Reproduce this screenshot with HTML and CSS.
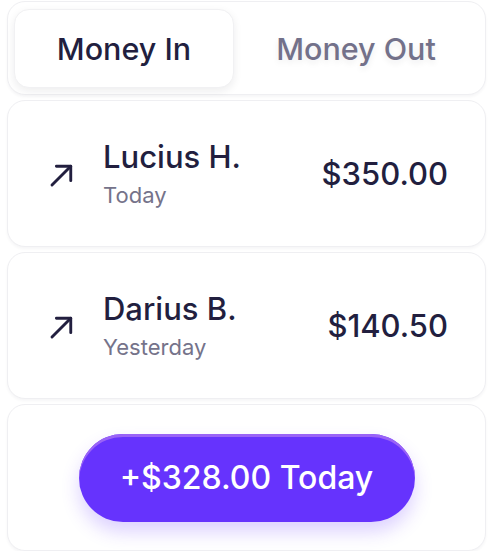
FILE: index.html
```html
<!DOCTYPE html>
<html lang="en">

<head>
    <meta charset="UTF-8">
    <meta name="viewport" content="width=device-width, initial-scale=1.0">
    <title>Money In</title>
    <link rel="stylesheet" href="styles.css">
</head>

<body>
    <div class="panel">
        <div class="card tabs">
            <button class="tab active">Money In</button>
            <button class="tab">Money Out</button>
        </div>

        <div class="card row">
            <svg class="arrow" width="30" height="30" viewBox="0 0 24 24" fill="none" stroke="currentColor"
                stroke-width="2.3" stroke-linecap="round" stroke-linejoin="round">
                <path d="M4 20 L19 5" />
                <path d="M7.5 5 H19 V16.5" />
            </svg>
            <div class="who">
                <div class="name">Lucius H.</div>
                <div class="when">Today</div>
            </div>
            <div class="amount">$350.00</div>
        </div>

        <div class="card row">
            <svg class="arrow" width="30" height="30" viewBox="0 0 24 24" fill="none" stroke="currentColor"
                stroke-width="2.3" stroke-linecap="round" stroke-linejoin="round">
                <path d="M4 20 L19 5" />
                <path d="M7.5 5 H19 V16.5" />
            </svg>
            <div class="who">
                <div class="name">Darius B.</div>
                <div class="when">Yesterday</div>
            </div>
            <div class="amount">$140.50</div>
        </div>

        <div class="card total">
            <button class="total-btn">+$328.00 Today</button>
        </div>
    </div>
</body>

</html>
```

FILE: styles.css
```css
body {
    margin: 0;
    padding: 0;
    background: #fff;
    font-family: Inter, 'Noto Sans', sans-serif;
    color: #221f3f;
}

.panel {
    display: flex;
    flex-direction: column;
    gap: 5px;
    padding: 1px 6px 0 7px;
}

.card {
    box-sizing: border-box;
    background: #fff;
    border: 1px solid #efeff2;
    border-radius: 18px;
    box-shadow: 0 2px 3px rgba(20, 20, 40, 0.04);
}

.tabs {
    display: grid;
    grid-template-columns: 220px 1fr;
    height: 94px;
    padding: 7px 7px 6px 6px;
}

.tab {
    border: none;
    background: none;
    font-family: inherit;
    font-size: 30.5px;
    font-weight: 450;
    color: #73718a;
    text-shadow: 0 3px 6px rgba(20, 20, 40, 0.08);
    cursor: pointer;
}

.tab.active {
    background: #fff;
    color: #221f3f;
    text-shadow: none;
    border-radius: 15px;
    border: 1px solid #f1f1f3;
    box-shadow: 0 3px 8px rgba(20, 20, 40, 0.08);
}

.row {
    display: flex;
    align-items: center;
    height: 147px;
    padding: 0 37px 0 39px;
}

.arrow {
    color: #221f3f;
    margin-right: 26px;
    margin-top: 2px;
}

.who {
    flex: 1;
}

.name {
    font-size: 31px;
    font-weight: 450;
    line-height: 36px;
}

.when {
    font-size: 22px;
    color: #75738a;
    line-height: 28px;
    margin-top: 6px;
}

.amount {
    font-size: 31px;
    font-weight: 450;
}

.total {
    display: flex;
    justify-content: center;
    align-items: center;
    height: 147px;
}

.total-btn {
    width: 336px;
    height: 88px;
    border: none;
    border-radius: 44px;
    background: #6633fd;
    box-shadow: inset 0 3px 0 #9a63f6, 0 10px 18px rgba(102, 51, 253, 0.22);
    color: #fff;
    font-family: inherit;
    font-size: 32px;
    font-weight: 450;
    cursor: pointer;
}
```
